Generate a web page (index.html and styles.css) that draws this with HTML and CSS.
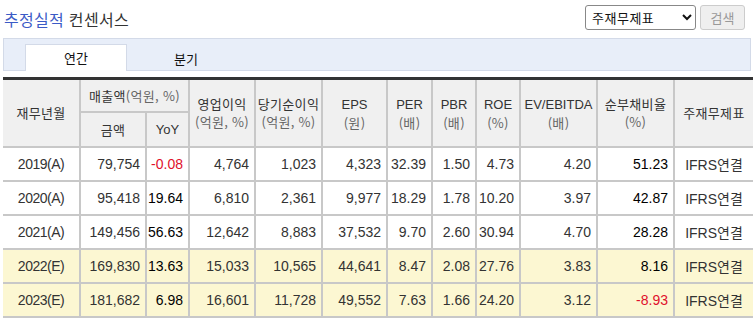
FILE: index.html
```html
<!DOCTYPE html>
<html lang="ko">
<head>
<meta charset="utf-8">
<link rel="stylesheet" href="styles.css">
</head>
<body>
<div class="page">
  <div class="top">
    <h2 class="title"><span class="blue">추정실적</span> 컨센서스</h2>
    <div class="controls">
      <select class="sel"><option>주재무제표</option></select>
      <button class="btn" disabled>검색</button>
    </div>
  </div>
  <div class="tabs">
    <div class="tab active">연간</div>
    <div class="tab">분기</div>
  </div>
  <table class="grid">
    <colgroup>
      <col class="c77"><col class="c66"><col class="c43"><col class="c66"><col class="c67"><col class="c65"><col class="c45"><col class="c44"><col class="c44"><col class="c77"><col class="c77"><col class="c79">
    </colgroup>
    <thead>
      <tr class="h1">
        <th rowspan="2">재무년월</th>
        <th colspan="2">매출액<span class="unit">(억원, %)</span></th>
        <th rowspan="2">영업이익<br><span class="unit">(억원, %)</span></th>
        <th rowspan="2">당기순이익<br><span class="unit">(억원, %)</span></th>
        <th rowspan="2"><span class="en">EPS</span><br><span class="unit">(원)</span></th>
        <th rowspan="2"><span class="en">PER</span><br><span class="unit">(배)</span></th>
        <th rowspan="2"><span class="en">PBR</span><br><span class="unit">(배)</span></th>
        <th rowspan="2"><span class="en">ROE</span><br><span class="unit">(%)</span></th>
        <th rowspan="2"><span class="en">EV/EBITDA</span><br><span class="unit">(배)</span></th>
        <th rowspan="2">순부채비율<br><span class="unit">(%)</span></th>
        <th rowspan="2">주재무제표</th>
      </tr>
      <tr class="h2">
        <th>금액</th>
        <th><span class="en">YoY</span></th>
      </tr>
    </thead>
    <tbody>
      <tr>
        <td class="yr">2019(A)</td><td>79,754</td><td class="em neg">-0.08</td><td>4,764</td><td>1,023</td><td>4,323</td><td>32.39</td><td>1.50</td><td>4.73</td><td>4.20</td><td class="em">51.23</td><td class="std">IFRS연결</td>
      </tr>
      <tr>
        <td class="yr">2020(A)</td><td>95,418</td><td class="em">19.64</td><td>6,810</td><td>2,361</td><td>9,977</td><td>18.29</td><td>1.78</td><td>10.20</td><td>3.97</td><td class="em">42.87</td><td class="std">IFRS연결</td>
      </tr>
      <tr>
        <td class="yr">2021(A)</td><td>149,456</td><td class="em">56.63</td><td>12,642</td><td>8,883</td><td>37,532</td><td>9.70</td><td>2.60</td><td>30.94</td><td>4.70</td><td class="em">28.28</td><td class="std">IFRS연결</td>
      </tr>
      <tr class="est">
        <td class="yr">2022(E)</td><td>169,830</td><td class="em">13.63</td><td>15,033</td><td>10,565</td><td>44,641</td><td>8.47</td><td>2.08</td><td>27.76</td><td>3.83</td><td class="em">8.16</td><td class="std">IFRS연결</td>
      </tr>
      <tr class="est">
        <td class="yr">2023(E)</td><td>181,682</td><td class="em">6.98</td><td>16,601</td><td>11,728</td><td>49,552</td><td>7.63</td><td>1.66</td><td>24.20</td><td>3.12</td><td class="em neg">-8.93</td><td class="std">IFRS연결</td>
      </tr>
    </tbody>
  </table>
</div>
</body>
</html>
```

FILE: styles.css
```css
html, body {
  margin: 0;
  padding: 0;
  background: #fff;
  overflow: hidden;
}
.page {
  width: 750px;
  padding-left: 3px;
  font-family: "Noto Sans CJK KR", "Liberation Sans", sans-serif;
  color: #333;
}
.top {
  height: 38px;
  display: flex;
  align-items: flex-start;
  justify-content: space-between;
}
.title {
  margin: 8px 0 0 1px;
  font-size: 16px;
  font-weight: normal;
  line-height: 22px;
  color: #333;
  letter-spacing: 0.3px;
}
.blue { color: #3b5bc6; }
.controls {
  display: flex;
  gap: 4px;
  margin-top: 5px;
  margin-right: 8px;
}
.sel {
  width: 111px;
  height: 25px;
  font-family: "Noto Sans CJK KR", sans-serif;
  font-size: 13px;
  letter-spacing: 0.5px;
  color: #111;
  border: 1px solid #888;
  border-radius: 3px;
  background: #fff;
  padding: 0 2px;
}
.btn {
  width: 45px;
  height: 25px;
  font-family: "Noto Sans CJK KR", sans-serif;
  font-size: 13px;
  color: #999;
  background: #efefef;
  border: 1px solid #ccc;
  border-radius: 3px;
  padding: 0;
}
.tabs {
  height: 31px;
  border: 1px solid #d3dae8;
  background: #e8eef9;
  display: flex;
  align-items: flex-end;
  padding-left: 21px;
  gap: 8px;
  box-sizing: content-box;
  width: 725px;
}
.tab {
  width: 100px;
  height: 25px;
  margin-bottom: -1px;
  font-size: 13px;
  line-height: 26px;
  text-align: center;
  color: #111;
  border: 1px solid transparent;
  border-bottom: none;
}
.tab.active {
  background: #fff;
  border-color: #d3dae8;
  height: 26px;
}
.grid {
  margin-top: 6px;
  border-collapse: collapse;
  table-layout: fixed;
  width: 750px;
  border-top: 3px solid #333;
  border-bottom: 2px solid #c8c8c8;
}
.c77 { width: 77px; }
.c66 { width: 66px; }
.c43 { width: 43px; }
.c67 { width: 67px; }
.c65 { width: 65px; }
.c45 { width: 45px; }
.c44 { width: 44px; }
.c79 { width: 79px; }
.grid th, .grid td {
  border: 2px solid #c8c8c8;
  padding: 0;
}
.grid tr > :first-child { border-left: none; }
.grid tr > :last-child { border-right: none; }
.grid tr.h2 > :last-child { border-right: 2px solid #c8c8c8; }
.grid th {
  background: #f0f0f0;
  font-weight: normal;
  font-size: 13px;
  line-height: 18px;
  color: #333;
  text-align: center;
  white-space: nowrap;
  letter-spacing: 0.3px;
}
.grid .h1 th { height: 31px; }
.grid .h2 th { height: 33px; }
.grid .unit { color: #666; }
.grid .en {
  font-family: "Liberation Sans", sans-serif;
  font-size: 13px;
  letter-spacing: 0;
}
.grid td {
  height: 32px;
  font-family: "Liberation Sans", sans-serif;
  font-size: 14px;
  color: #333;
  text-align: right;
  padding-right: 5px;
  white-space: nowrap;
}
.grid td.yr {
  text-align: center;
  padding-right: 0;
  letter-spacing: -0.5px;
}
.grid td.std {
  text-align: center;
  padding-right: 0;
  font-family: "Liberation Sans", "Noto Sans CJK KR", sans-serif;
}
.grid td.em { color: #000; }
.grid td.neg { color: #e0102c; }
.grid tr.est td { background: #fcf7d2; }
```
